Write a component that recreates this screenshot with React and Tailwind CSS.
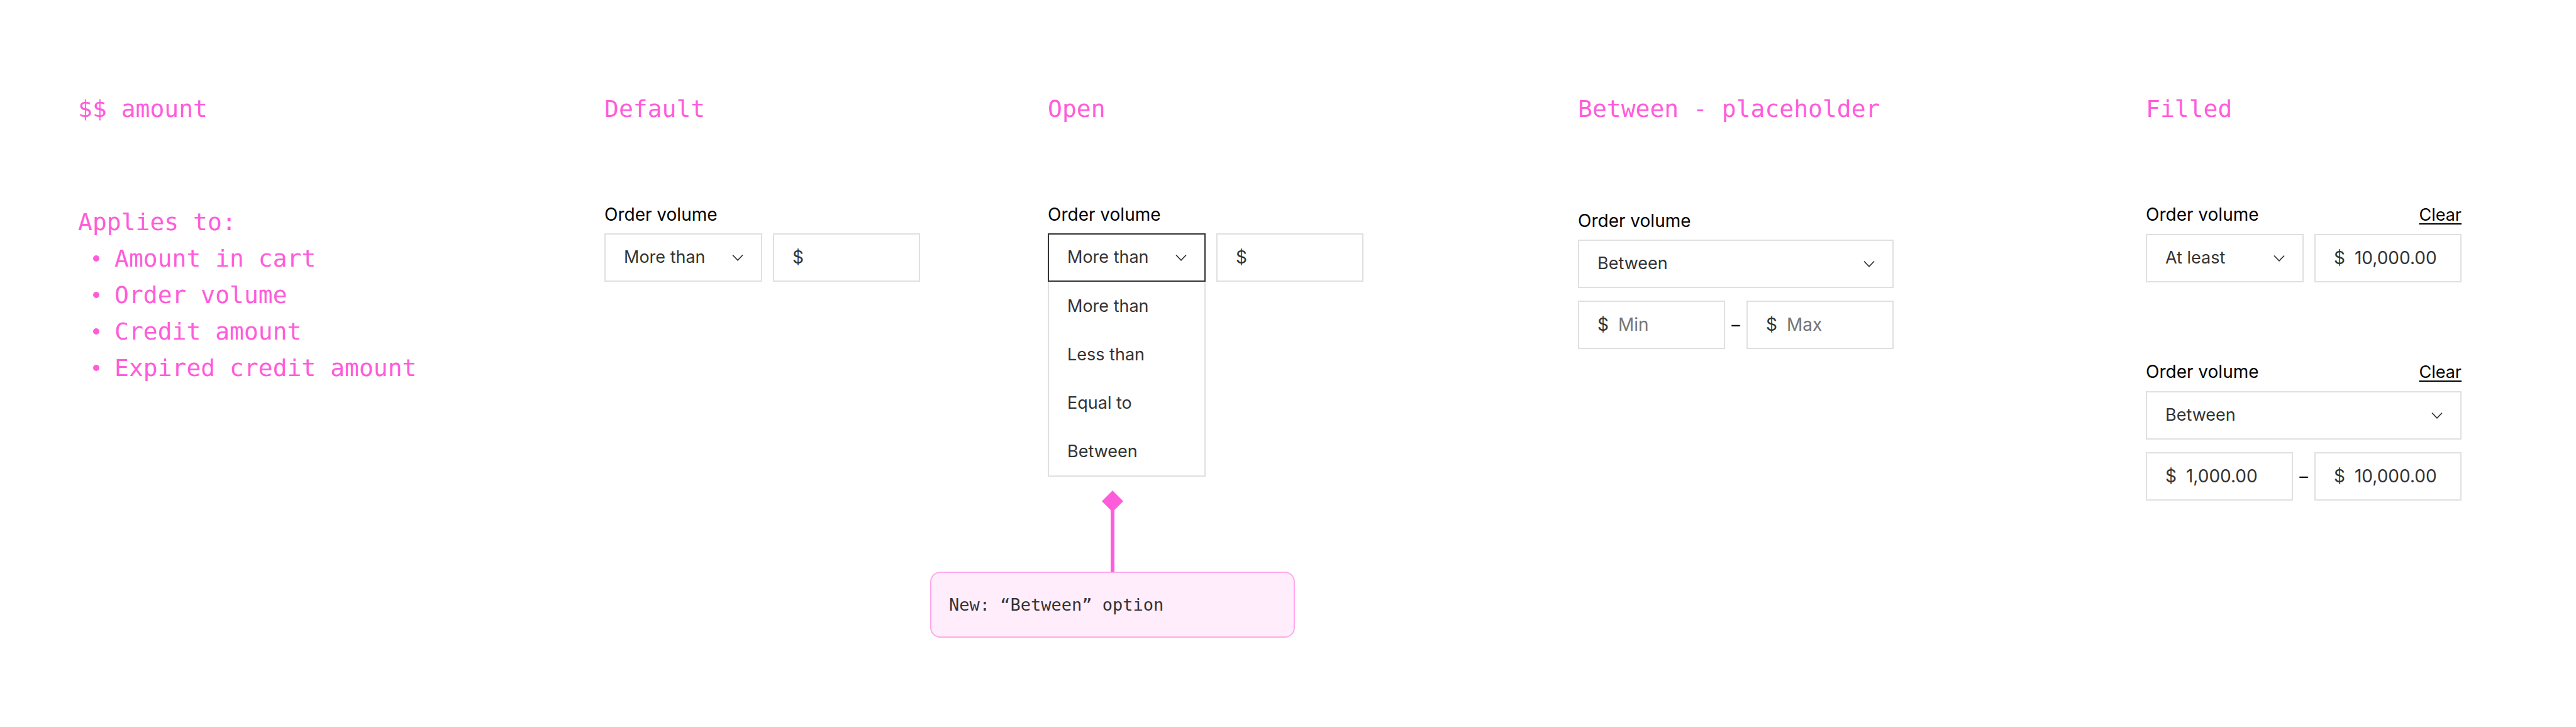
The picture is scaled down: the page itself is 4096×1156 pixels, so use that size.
import React, { useId } from "react";

const OPTIONS = ["More than", "Less than", "Equal to", "Between"];
const APPLIES_TO = ["Amount in cart", "Order volume", "Credit amount", "Expired credit amount"];

function Chevron() {
  return (
    <svg
      className="pointer-events-none absolute top-1/2 right-[30px] h-3 w-[18px] -translate-y-1/2"
      viewBox="0 0 18 12"
      fill="none"
      stroke="#333333"
      strokeWidth="1.8"
      aria-hidden="true"
    >
      <path d="M1 1.5 L9 9.8 L17 1.5" />
    </svg>
  );
}

function Column({ title, children }) {
  return (
    <section className="flex min-w-0 flex-col items-start">
      <h2 className="font-['DejaVu_Sans_Mono',monospace] text-[38px] leading-[58px] whitespace-nowrap text-[#ff5cdb]">
        {title}
      </h2>
      {children}
    </section>
  );
}

function Field({ id, clearable, children }) {
  return (
    <div className="w-[502px] max-w-full">
      <div className="mb-3 flex items-baseline justify-between leading-9 text-black">
        <label htmlFor={id} className="text-[28px]">Order volume</label>
        {clearable && (
          <button type="button" className="cursor-pointer underline decoration-2 underline-offset-4">
            Clear
          </button>
        )}
      </div>
      {children}
    </div>
  );
}

function Select({ id, value, extra = [] }) {
  return (
    <div className="relative min-w-0 flex-1">
      <select
        id={id}
        defaultValue={value}
        className="block h-[77px] w-full appearance-none border-2 border-[#e0e0e0] bg-white pr-14 pb-0.5 pl-[29px] text-[#333333] outline-none"
      >
        {[...extra, ...OPTIONS].map((o) => (
          <option key={o}>{o}</option>
        ))}
      </select>
      <Chevron />
    </div>
  );
}

function Money({ name, value, placeholder }) {
  return (
    <label className="flex h-[77px] w-[234px] items-center gap-[15px] border-2 border-[#e0e0e0] bg-white pb-0.5 pl-[29px] text-[28px] text-[#333333]">
      <span>$</span>
      <input
        type="text"
        aria-label={name}
        defaultValue={value}
        placeholder={placeholder}
        className="w-0 min-w-0 flex-1 bg-transparent outline-none placeholder:text-[#757575]"
      />
    </label>
  );
}

function Range({ min, max, placeholders }) {
  return (
    <div className="mt-5 flex items-center justify-between">
      <Money name="Minimum" value={min} placeholder={placeholders ? "Min" : undefined} />
      <span className="text-black">–</span>
      <Money name="Maximum" value={max} placeholder={placeholders ? "Max" : undefined} />
    </div>
  );
}

function OpenSelect({ id }) {
  return (
    <div className="relative min-w-0 flex-1">
      <button
        id={id}
        type="button"
        aria-haspopup="listbox"
        aria-expanded="true"
        className="block h-[77px] w-full border-2 border-[#333333] bg-white pb-0.5 pl-[29px] text-left text-[#333333]"
      >
        More than
      </button>
      <Chevron />
    </div>
  );
}

function Menu() {
  return (
    <ul role="listbox" aria-label="Order volume" className="w-[251px] border-2 border-t-0 border-[#e0e0e0] bg-white text-[#333333]">
      {OPTIONS.map((o) => (
        <li key={o} role="option" aria-selected={o === "More than"} className="flex h-[77px] items-center pl-[29px]">
          {o}
        </li>
      ))}
    </ul>
  );
}

function Callout({ children }) {
  return (
    <div className="mt-[22px] -ml-[187px] flex w-[580px] flex-col items-center">
      <svg className="h-[129px] w-[34px]" viewBox="0 0 34 129" fill="#ff5cdb" aria-hidden="true">
        <path d="M17 0 L34 17 L17 34 L0 17 Z" />
        <path d="M14 17 H20 V129 H14 Z" />
      </svg>
      <p className="w-full rounded-2xl border-2 border-[#ffa8eb] bg-[#ffedfb] px-7 py-8 font-['DejaVu_Sans_Mono',monospace] leading-[37px] text-[#333333]">
        {children}
      </p>
    </div>
  );
}

export default function App() {
  const id = useId();
  return (
    <main className="grid min-h-screen grid-cols-[837fr_705fr_843fr_903fr_684fr] bg-white pt-36 pl-[124px] font-[Inter,sans-serif] text-[27px] leading-9">
      <Column title="$$ amount">
        <div className="mt-[122px] font-['DejaVu_Sans_Mono',monospace] text-[38px] leading-[58px] text-[#ff5cdb]">
          <p>Applies to:</p>
          <ul>
            {APPLIES_TO.map((item) => (
              <li key={item} className="flex items-center">
                <span className="mr-6 ml-6 size-[10px] rounded-full bg-[#ff5cdb]" />
                {item}
              </li>
            ))}
          </ul>
        </div>
      </Column>

      <Column title="Default">
        <div className="mt-[121px]">
          <Field id={id + "default"}>
            <div className="flex w-[502px] gap-[17px]">
              <Select id={id + "default"} value="More than" />
              <Money name="Amount" />
            </div>
          </Field>
        </div>
      </Column>

      <Column title="Open">
        <div className="mt-[121px]">
          <Field id={id + "open"}>
            <div className="flex w-[502px] gap-[17px]">
              <OpenSelect id={id + "open"} />
              <Money name="Amount" />
            </div>
            <Menu />
          </Field>
        </div>
        <Callout>New: “Between” option</Callout>
      </Column>

      <Column title="Between - placeholder">
        <div className="mt-[131px]">
          <Field id={id + "between"}>
            <div className="flex w-[502px]">
              <Select id={id + "between"} value="Between" />
            </div>
            <Range placeholders />
          </Field>
        </div>
      </Column>

      <Column title="Filled">
        <div className="mt-[121px] flex flex-col gap-[124px]">
          <Field id={id + "filled"} clearable>
            <div className="flex w-[502px] gap-[17px]">
              <Select id={id + "filled"} value="At least" extra={["At least"]} />
              <Money name="Amount" value="10,000.00" />
            </div>
          </Field>
          <Field id={id + "range"} clearable>
            <div className="flex w-[502px]">
              <Select id={id + "range"} value="Between" />
            </div>
            <Range min="1,000.00" max="10,000.00" />
          </Field>
        </div>
      </Column>
    </main>
  );
}
